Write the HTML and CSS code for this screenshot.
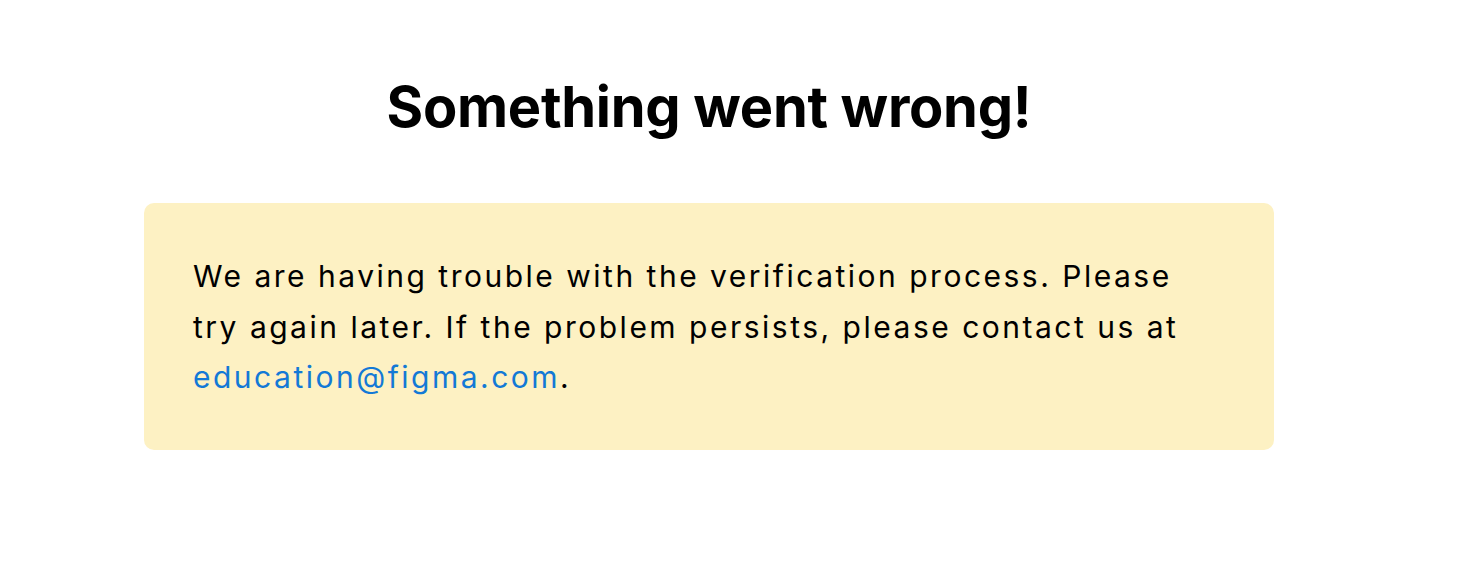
FILE: index.html
```html
<!DOCTYPE html>
<html lang="en">
<head>
<meta charset="utf-8">
<title>Something went wrong!</title>
<link rel="stylesheet" href="styles.css">
</head>
<body>
<main class="page">
  <h1 class="title">Something went wrong!</h1>
  <div class="notice">
    <p class="notice-text">We are having trouble with the verification process. Please try again later. If the problem persists, please contact us at <a class="notice-link" href="mailto:education@figma.com">education@figma.com</a>.</p>
  </div>
</main>
</body>
</html>
```

FILE: styles.css
```css
html, body {
  margin: 0;
  padding: 0;
  background: #ffffff;
}

.page {
  width: 1130px;
  margin-left: 144px;
  padding-top: 72px;
  display: flex;
  flex-direction: column;
  align-items: stretch;
}

.title {
  margin: 0;
  text-align: center;
  font-family: Inter, "Liberation Sans", sans-serif;
  font-weight: 700;
  font-size: 56px;
  line-height: 70px;
  letter-spacing: -0.3px;
  color: #000000;
}

.notice {
  margin-top: 61px;
  background: #fdf1c3;
  border-radius: 10px;
  padding: 48px 49px 47px;
}

.notice-text {
  margin: 0;
  font-family: Inter, "Liberation Sans", sans-serif;
  font-size: 30px;
  line-height: 50.5px;
  letter-spacing: 2.5px;
  color: #000000;
}

.notice-link {
  color: #1379d6;
  text-decoration: none;
}
```
